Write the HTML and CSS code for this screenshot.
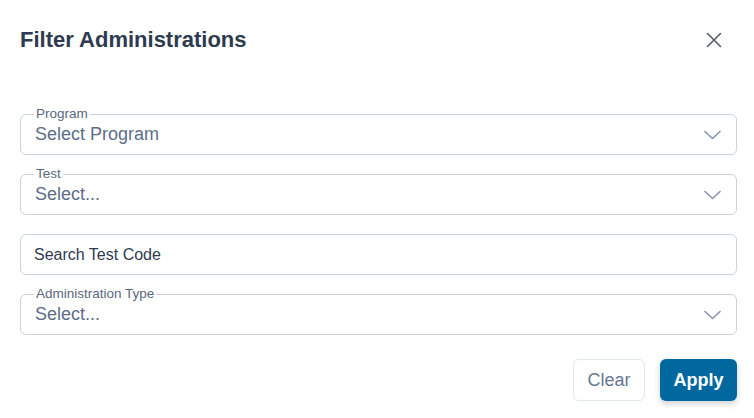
FILE: index.html
```html
<!DOCTYPE html>
<html>
<head>
<meta charset="utf-8">
<link rel="stylesheet" href="styles.css">
</head>
<body>
<div class="modal">
  <div class="header">
    <h2 class="title">Filter Administrations</h2>
    <button class="close" aria-label="Close">
      <svg width="16" height="16" viewBox="0 0 16 16"><path d="M1.5 1.5 L14.5 14.5 M14.5 1.5 L1.5 14.5" stroke="#4f5d73" stroke-width="1.6" fill="none" stroke-linecap="round"/></svg>
    </button>
  </div>
  <div class="fields">
    <div class="field">
      <span class="label">Program</span>
      <span class="value">Select Program</span>
      <svg class="chev" width="17" height="10" viewBox="0 0 17 10"><path d="M1 1.5 L8.5 8.5 L16 1.5" stroke="#8595ad" stroke-width="1.6" fill="none" stroke-linecap="round" stroke-linejoin="round"/></svg>
    </div>
    <div class="field">
      <span class="label">Test</span>
      <span class="value">Select...</span>
      <svg class="chev" width="17" height="10" viewBox="0 0 17 10"><path d="M1 1.5 L8.5 8.5 L16 1.5" stroke="#8595ad" stroke-width="1.6" fill="none" stroke-linecap="round" stroke-linejoin="round"/></svg>
    </div>
    <div class="field search">
      <span class="input-text">Search Test Code</span>
    </div>
    <div class="field">
      <span class="label">Administration Type</span>
      <span class="value">Select...</span>
      <svg class="chev" width="17" height="10" viewBox="0 0 17 10"><path d="M1 1.5 L8.5 8.5 L16 1.5" stroke="#8595ad" stroke-width="1.6" fill="none" stroke-linecap="round" stroke-linejoin="round"/></svg>
    </div>
  </div>
  <div class="footer">
    <button class="btn btn-clear">Clear</button>
    <button class="btn btn-apply">Apply</button>
  </div>
</div>
</body>
</html>
```
FILE: styles.css
```css
html, body {
  margin: 0;
  padding: 0;
  background: #ffffff;
}
body {
  font-family: "Liberation Sans", Arial, sans-serif;
}
.modal {
  width: 754px;
  height: 418px;
  box-sizing: border-box;
  padding: 20px 17px 0 20px;
}
.header {
  display: flex;
  justify-content: space-between;
  align-items: center;
  height: 40px;
}
.title {
  margin: 0;
  font-size: 22px;
  font-weight: 700;
  color: #2d3a4f;
}
.close {
  border: none;
  background: none;
  padding: 0;
  margin-right: 15px;
  width: 16px;
  height: 16px;
  display: flex;
}
.fields {
  margin-top: 54px;
  display: flex;
  flex-direction: column;
  gap: 19px;
}
.field {
  position: relative;
  height: 41px;
  box-sizing: border-box;
  border: 1px solid #c9d3e1;
  border-radius: 6px;
  display: flex;
  align-items: center;
  justify-content: space-between;
  padding: 0 15px 0 14px;
}
.label {
  position: absolute;
  left: 13px;
  top: -8px;
  padding: 0 2px;
  background: #ffffff;
  font-size: 13.5px;
  line-height: 14px;
  color: #5b6880;
}
.value {
  font-size: 18px;
  color: #5d6d88;
}
.search {
  padding-left: 13px;
}
.input-text {
  font-size: 16px;
  color: #2f3b4f;
}
.chev {
  display: block;
}
.footer {
  margin-top: 24px;
  display: flex;
  justify-content: flex-end;
  gap: 15px;
}
.btn {
  height: 42px;
  border-radius: 6px;
  font-family: "Liberation Sans", Arial, sans-serif;
  font-size: 18px;
  padding: 0;
  cursor: pointer;
}
.btn-clear {
  width: 72px;
  border: 1px solid #e1e7ef;
  background: #ffffff;
  color: #687891;
  font-weight: 500;
}
.btn-apply {
  width: 77px;
  border: none;
  background: #00679f;
  color: #ffffff;
  font-weight: 700;
  box-shadow: 0 3px 6px rgba(0, 0, 0, 0.18);
}
```
